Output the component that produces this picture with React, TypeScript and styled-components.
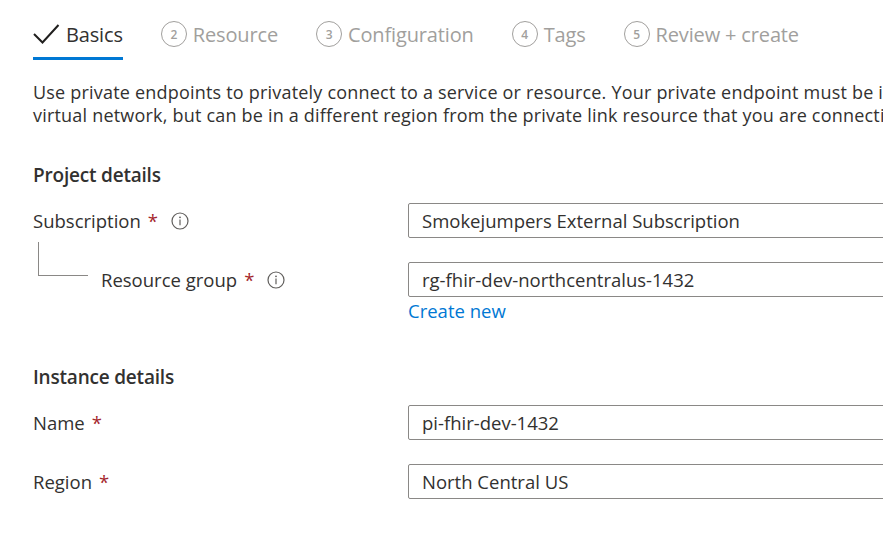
import React from "react";
import styled, { createGlobalStyle } from "styled-components";

const GlobalStyle = createGlobalStyle`
  html, body {
    margin: 0;
    padding: 0;
    background: #ffffff;
    overflow: hidden;
  }
  body {
    font-family: "Open Sans", "Noto Sans", "Liberation Sans", sans-serif;
    color: #323130;
  }
`;

const Page = styled.div`
  width: 883px;
  height: 550px;
  overflow: hidden;
  padding-left: 33px;
  box-sizing: border-box;
`;

const Tabs = styled.div`
  display: flex;
  align-items: flex-start;
  gap: 38px;
  height: 60px;
`;

const Tab = styled.div<{ active?: boolean }>`
  display: flex;
  align-items: center;
  gap: 6px;
  height: 60px;
  box-sizing: border-box;
  padding-top: 11px;
  font-size: 20px;
  letter-spacing: -0.15px;
  color: ${(p) => (p.active ? "#323130" : "#a19f9d")};
  border-bottom: 3px solid ${(p) => (p.active ? "#0078d4" : "transparent")};
`;

const StepCircle = styled.span`
  display: inline-flex;
  align-items: center;
  justify-content: center;
  width: 26px;
  height: 26px;
  border: 1.5px solid #a19f9d;
  border-radius: 50%;
  font-size: 12px;
  font-weight: 600;
  color: #a19f9d;
  box-sizing: border-box;
`;

const Intro = styled.p`
  margin: 21px 0 0;
  width: 900px;
  font-size: 18px;
  line-height: 23px;
  letter-spacing: 0.2px;
  color: #323130;
  white-space: nowrap;
`;

const SectionTitle = styled.h2<{ top?: number }>`
  margin: ${(p) => p.top ?? 35}px 0 0;
  font-size: 19px;
  font-weight: 600;
  line-height: 26px;
  letter-spacing: -0.2px;
  color: #323130;
`;

const Row = styled.div<{ gap?: number }>`
  display: grid;
  grid-template-columns: 375px 520px;
  align-items: start;
  margin-top: ${(p) => p.gap ?? 14}px;
`;

const LabelCell = styled.div<{ indent?: boolean }>`
  position: relative;
  display: flex;
  align-items: center;
  height: 35px;
  padding-left: ${(p) => (p.indent ? "68px" : "0")};
  font-size: 18.5px;
  color: #323130;
`;

const Tree = styled.span`
  position: absolute;
  left: 5px;
  top: -20px;
  width: 49px;
  height: 33px;
  border-left: 1px solid #8a8886;
  border-bottom: 1px solid #8a8886;
`;

const Required = styled.span`
  color: #a4262c;
  margin-left: 7px;
`;

const InfoIcon = styled.span`
  display: inline-flex;
  margin-left: 13px;
`;

const FieldCell = styled.div`
  display: flex;
  flex-direction: column;
`;

const Field = styled.div`
  height: 35px;
  box-sizing: border-box;
  border: 1px solid #8a8886;
  border-radius: 2px;
  padding: 0 13px;
  display: flex;
  align-items: center;
  font-size: 18.5px;
  color: #323130;
`;

const Link = styled.a`
  margin-top: 1px;
  font-size: 18.5px;
  color: #0078d4;
  line-height: 26px;
  text-decoration: none;
`;

const Check = () => (
  <svg width="27" height="22" viewBox="0 0 27 22">
    <path d="M1 11 L9.5 19.5 L25.5 2" fill="none" stroke="#201f1e" strokeWidth="2" />
  </svg>
);

const Info = () => (
  <svg width="18" height="18" viewBox="0 0 18 18">
    <circle cx="9" cy="9" r="8" fill="none" stroke="#605e5c" strokeWidth="1.2" />
    <circle cx="9" cy="5.3" r="0.9" fill="#605e5c" />
    <line x1="9" y1="7.5" x2="9" y2="13.2" stroke="#605e5c" strokeWidth="1.2" />
  </svg>
);

const steps = ["Resource", "Configuration", "Tags", "Review + create"];

const App: React.FC = () => {
  return (
    <>
      <GlobalStyle />
      <Page>
        <Tabs>
          <Tab active>
            <Check />
            Basics
          </Tab>
          {steps.map((s, i) => (
            <Tab key={s}>
              <StepCircle>{i + 2}</StepCircle>
              {s}
            </Tab>
          ))}
        </Tabs>
        <Intro>
          Use private endpoints to privately connect to a service or resource. Your private endpoint must be in the same region as your
          <br />
          virtual network, but can be in a different region from the private link resource that you are connecting to.
        </Intro>

        <SectionTitle>Project details</SectionTitle>
        <Row gap={15}>
          <LabelCell>
            Subscription<Required>*</Required>
            <InfoIcon>
              <Info />
            </InfoIcon>
          </LabelCell>
          <FieldCell>
            <Field>Smokejumpers External Subscription</Field>
          </FieldCell>
        </Row>
        <Row gap={24}>
          <LabelCell indent>
            <Tree />
            Resource group<Required>*</Required>
            <InfoIcon>
              <Info />
            </InfoIcon>
          </LabelCell>
          <FieldCell>
            <Field>rg-fhir-dev-northcentralus-1432</Field>
            <Link href="#">Create new</Link>
          </FieldCell>
        </Row>

        <SectionTitle top={40}>Instance details</SectionTitle>
        <Row gap={15}>
          <LabelCell>
            Name<Required>*</Required>
          </LabelCell>
          <FieldCell>
            <Field>pi-fhir-dev-1432</Field>
          </FieldCell>
        </Row>
        <Row gap={24}>
          <LabelCell>
            Region<Required>*</Required>
          </LabelCell>
          <FieldCell>
            <Field>North Central US</Field>
          </FieldCell>
        </Row>
      </Page>
    </>
  );
};

export default App;
